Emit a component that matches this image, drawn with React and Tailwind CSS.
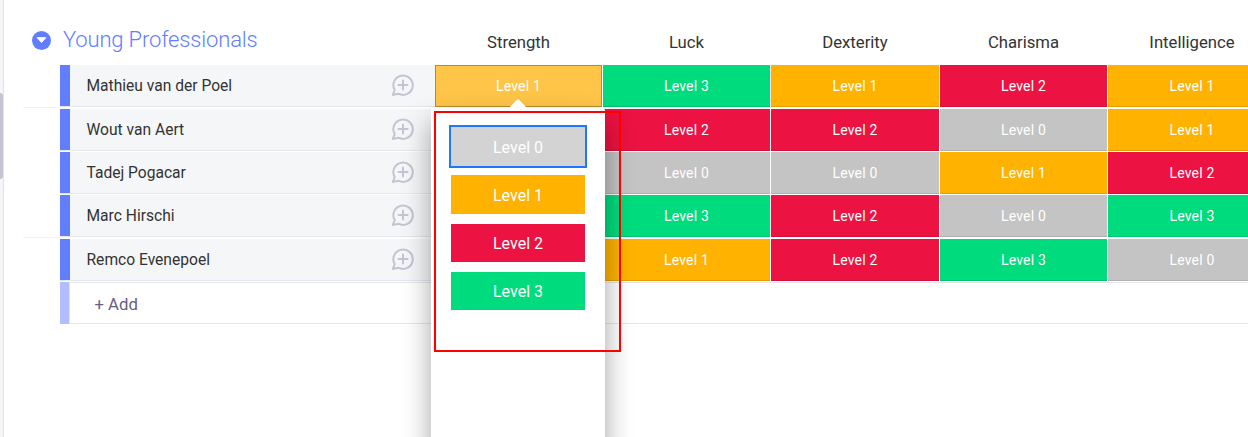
import React from 'react'
import clsx from 'clsx'

const columns = [
  { name: 'Strength', width: 'w-[167px]' },
  { name: 'Luck', width: 'w-[167px]' },
  { name: 'Dexterity', width: 'w-[168px]' },
  { name: 'Charisma', width: 'w-[167px]' },
  { name: 'Intelligence', width: 'w-[168px]' }
]

const rows = [
  { name: 'Mathieu van der Poel', levels: [1, 3, 1, 2, 1], gap: 'mb-0.5', line: true },
  { name: 'Wout van Aert', levels: [1, 2, 2, 0, 1], gap: 'mb-px' },
  { name: 'Tadej Pogacar', levels: [2, 0, 0, 1, 2], gap: 'mb-px' },
  { name: 'Marc Hirschi', levels: [0, 3, 2, 0, 3], gap: 'mb-0.5', line: true },
  { name: 'Remco Evenepoel', levels: [3, 1, 2, 3, 0], gap: 'mb-px' }
]

const levelColors = ['bg-[#c4c4c4]', 'bg-[#ffb300]', 'bg-[#ec1241]', 'bg-[#00dc7d]']

const options = [
  { level: 1, className: 'h-[39px] mb-2.5' },
  { level: 2, className: 'h-[38px] mb-2.5' },
  { level: 3, className: 'h-[38px]' }
]

const ChatIcon = () => (
  <svg className="w-6 h-6 mb-0.5" viewBox="0 0 24 24" fill="none" stroke="#c5c4d4" strokeWidth="2" strokeLinecap="round" strokeLinejoin="round">
    <path d="M3.7 17.1A9.7 9.7 0 1 1 7.4 20.7L1.8 21.9z" />
    <path d="M12 7.5v9M7.5 12h9" />
  </svg>
)

const LevelCell = ({ level, width, selected }) => (
  <div
    className={clsx(
      'h-[42px] mr-px shrink-0 flex items-center justify-center text-white text-[14px] tracking-[0.2px]',
      width,
      selected ? 'bg-[#ffc548] border border-[#b88a2c]' : ['border-b border-black/10', levelColors[level]]
    )}
  >
    <span className={selected ? '' : 'translate-y-[0.5px]'}>Level {level}</span>
  </div>
)

const Row = ({ row, first }) => (
  <div className={clsx('flex relative', row.gap)}>
    {row.line && <div className="absolute right-full bottom-[-1px] w-[37px] h-px bg-[#f3f3f5]" />}
    <div className="w-[375px] h-[42px] shrink-0 border-b border-[#e4e6ec]">
      <div className="h-[41px] flex items-center bg-[#f5f6f8] border-l-10 border-[#617eff] pl-[16.5px] pr-5">
        <span className="flex-1 pt-px text-[#333333] text-[15.6px] leading-6">{row.name}</span>
        <ChatIcon />
      </div>
    </div>
    {row.levels.map((level, index) => (
      <LevelCell key={index} level={level} width={columns[index].width} selected={first && index === 0} />
    ))}
  </div>
)

const LevelPicker = () => (
  <div className="absolute left-[431px] top-[108px] w-[174px] h-[360px] bg-white rounded-t-[3px] shadow-[0_14px_28px_rgba(0,0,0,0.36)] px-[18px] pt-[17px]">
    <svg className="absolute left-[78px] -top-[9px] w-[18px] h-[10px]" viewBox="0 0 18 10">
      <path d="M0 9L7.7 1Q9-0.3 10.3 1L18 9V10H0z" fill="#fff" />
    </svg>
    <div className="w-[138px] h-[43px] border-2 border-[#1f76ff] bg-[#d3d3d3] text-white text-[16px] flex items-center justify-center mb-[7px] pt-0.5">
      Level 0
    </div>
    <div className="px-0.5">
      {options.map((option) => (
        <div
          key={option.level}
          className={clsx('w-[134px] text-white text-[16px] flex items-center justify-center pt-0.5', option.className, levelColors[option.level])}
        >
          Level {option.level}
        </div>
      ))}
    </div>
  </div>
)

const App = () => {
  return (
    <div className="relative flex w-[1248px] h-[437px] overflow-hidden bg-white font-['Roboto',sans-serif]">
      {/* Collapsed side panel with its scrollbar */}
      <div className="w-1 shrink-0 bg-[#f5f6f8] border-r border-[#e1e3ea] pt-[93px]">
        <div className="h-[86px] bg-[#c5c4d4] rounded-r-[3px]" />
      </div>

      <div className="w-[1400px] shrink-0 pl-14">
        {/* Group header */}
        <div className="flex h-[65px]">
          <div className="-ml-7 w-[403px] shrink-0 flex items-start">
            <svg className="w-[19px] h-[19px] mt-[31px]" viewBox="0 0 19 19">
              <circle cx="9.5" cy="9.5" r="9.5" fill="#617eff" />
              <path d="M5.2 6.7h8.6L9.5 11.5z" fill="#fff" stroke="#fff" strokeWidth="1" strokeLinejoin="round" />
            </svg>
            <h2 className="ml-3 mt-[23px] text-[22px] leading-[34px] tracking-[-0.16px] font-light text-[#617eff]">Young Professionals</h2>
          </div>
          {columns.map((column) => (
            <div key={column.name} className={clsx('mr-px shrink-0 pt-[31px] text-center text-[16.7px] leading-6 text-[#333333]', column.width)}>
              {column.name}
            </div>
          ))}
        </div>

        {rows.map((row, index) => (
          <Row key={row.name} row={row} first={index === 0} />
        ))}

        {/* Add row */}
        <div className="flex h-[42px]">
          <div className="w-[9px] bg-[#b0beff]" />
          <div className="flex-1 border border-[#e4e6ec] pl-[24.5px] pt-1 flex items-center text-[16.7px] text-[#676080]">+ Add</div>
        </div>
      </div>

      <LevelPicker />
      <div className="absolute left-[434px] top-[111px] w-[187px] h-[241px] border-2 border-[#ff0000]" />
    </div>
  )
}

export default App
